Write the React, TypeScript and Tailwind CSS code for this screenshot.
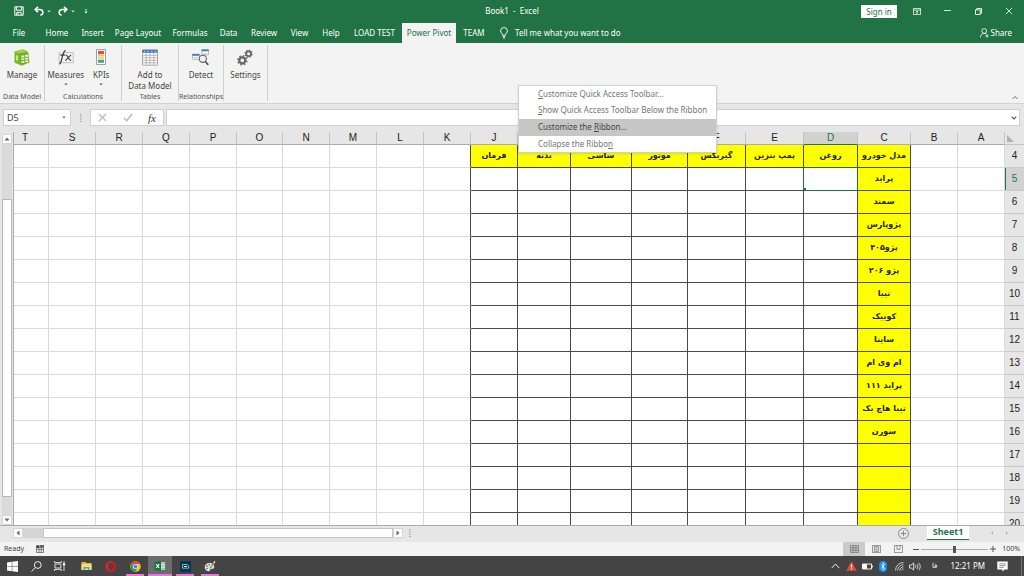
import type { ReactNode } from "react";

type Column = { name: string; width: string; framed?: boolean; frameEdge?: boolean };

const columns: Column[] = [
  { name: "T", width: "w-auto" },
  { name: "S", width: "w-[47px]" },
  { name: "R", width: "w-[47px]" },
  { name: "Q", width: "w-[47px]" },
  { name: "P", width: "w-[47px]" },
  { name: "O", width: "w-[46px]" },
  { name: "N", width: "w-[47px]" },
  { name: "M", width: "w-[47px]" },
  { name: "L", width: "w-[47px]" },
  { name: "K", width: "w-[47px]", frameEdge: true },
  { name: "J", width: "w-[47px]", framed: true },
  { name: "I", width: "w-[53px]", framed: true },
  { name: "H", width: "w-[61px]", framed: true },
  { name: "G", width: "w-[56px]", framed: true },
  { name: "F", width: "w-[58px]", framed: true },
  { name: "E", width: "w-[58px]", framed: true },
  { name: "D", width: "w-[54px]", framed: true },
  { name: "C", width: "w-[53px]", framed: true },
  { name: "B", width: "w-[47px]" },
  { name: "A", width: "w-[47px]" },
];

const headings: Record<string, string> = {
  J: "فرمان",
  I: "بدنه",
  H: "ساسی",
  G: "موتور",
  F: "گیربکس",
  E: "پمپ بنزین",
  D: "روغن",
  C: "مدل خودرو",
};

const models: Record<number, string> = {
  5: "پراید",
  6: "سمند",
  7: "پژوپارس",
  8: "پژو۴۰۵",
  9: "پژو ۲۰۶",
  10: "تیبا",
  11: "کوییک",
  12: "ساینا",
  13: "ام وی ام",
  14: "پراید ۱۱۱",
  15: "تیبا هاچ بک",
  16: "سورن",
};

const rows = Array.from({ length: 17 }, (_, i) => i + 4);

const tabs = [
  { label: "File", width: "w-[38px]" },
  { label: "Home", width: "w-[38px]" },
  { label: "Insert", width: "w-[33px]" },
  { label: "Page Layout", width: "w-[58px]" },
  { label: "Formulas", width: "w-[46px]" },
  { label: "Data", width: "w-[31px]" },
  { label: "Review", width: "w-[40px]" },
  { label: "View", width: "w-[31px]" },
  { label: "Help", width: "w-[32px]" },
  { label: "LOAD TEST", width: "w-[55px]" },
  { label: "Power Pivot", width: "w-[54px]", active: true },
  { label: "TEAM", width: "w-[36px]" },
];

function Caret({ className = "" }: { className?: string }) {
  return (
    <svg viewBox="0 0 6 4" className={`h-[3px] w-[4px] shrink-0 ${className}`} aria-hidden="true">
      <path d="M0.5 0.5h5L3 3.5z" fill="currentColor" />
    </svg>
  );
}

function TitleBar() {
  return (
    <header className="grid h-[22px] shrink-0 grid-cols-3 items-center text-white">
      <div className="flex items-center pl-[14px]">
        <button aria-label="Save">
          <svg viewBox="0 0 10 10" className="size-[10px]" fill="none" stroke="currentColor">
            <path d="M0.8 0.8h8.4v8.4H0.8zM2.3 1v3.2h5.4V1" />
            <path d="M2.8 9V6.3h4.4V9" />
            <path d="M4 7.2v1.6" />
          </svg>
        </button>
        <button aria-label="Undo" className="ml-[10px] flex items-center gap-[3px]">
          <svg viewBox="0 0 10 10" className="size-[10px]" fill="none" stroke="currentColor" strokeWidth="1.6">
            <path d="M4 0.9L1.2 3.5L4 6.1M1.4 3.5h4.3c4.1 0 4.1 5.5 0.6 5.5" />
          </svg>
          <Caret className="opacity-80" />
        </button>
        <button aria-label="Redo" className="ml-[7px] flex items-center gap-[3px]">
          <svg viewBox="0 0 10 10" className="size-[10px]" fill="none" stroke="currentColor" strokeWidth="1.6">
            <path d="M6 0.9l2.8 2.6L6 6.1M8.6 3.5H4.3c-4.1 0-4.1 5.5-0.6 5.5" />
          </svg>
          <Caret className="opacity-80" />
        </button>
        <button aria-label="Customize Quick Access Toolbar" className="ml-[9px]">
          <svg viewBox="0 0 5 6" className="h-[5px] w-[4px]" fill="currentColor">
            <path d="M1 0.5h3v1H1zM0.5 3h4L2.5 5.5z" />
          </svg>
        </button>
      </div>
      <h1 className="whitespace-pre text-center">Book1  -  Excel</h1>
      <div className="flex items-center justify-end pr-[11px]">
        <button className="mr-[16px] h-[13px] w-[36px] bg-white leading-[13px] text-[#217346]">Sign in</button>
        <button aria-label="Ribbon Display Options" className="mr-[23px]">
          <svg viewBox="0 0 8 7" className="h-[7px] w-[8px]" fill="none" stroke="currentColor" strokeWidth="0.8">
            <path d="M0.4 0.4h7.2v6.2H0.4zM0.4 2h7.2M4 6V3M2.7 4.2L4 3l1.3 1.2" />
          </svg>
        </button>
        <button aria-label="Minimize" className="mr-[24px]">
          <svg viewBox="0 0 7 7" className="size-[7px]" stroke="currentColor" strokeWidth="0.8">
            <path d="M0 2.5h7" />
          </svg>
        </button>
        <button aria-label="Restore Down" className="mr-[23px]">
          <svg viewBox="0 0 7 7" className="size-[7px]" fill="none" stroke="currentColor" strokeWidth="0.9">
            <path d="M0.5 1.8h4.7v4.7H0.5zM1.8 1.8V0.5h4.7v4.7H5.2" />
          </svg>
        </button>
        <button aria-label="Close">
          <svg viewBox="0 0 8 8" className="size-[8px]" stroke="currentColor" strokeWidth="0.8">
            <path d="M0.8 0.8l6.4 6.4M7.2 0.8L0.8 7.2" />
          </svg>
        </button>
      </div>
    </header>
  );
}

function TabStrip() {
  return (
    <nav className="flex h-[21px] shrink-0 items-stretch pt-px text-white">
      {tabs.map((tab) => (
        <button
          key={tab.label}
          className={`shrink-0 whitespace-nowrap ${tab.width} ${tab.active ? "bg-[#f3f3f3] text-[#217346]" : ""}`}
        >
          {tab.label}
        </button>
      ))}
      <button className="ml-[8px] flex items-center gap-[7px] whitespace-nowrap">
        <svg viewBox="0 0 8 12" className="h-[12px] w-[8px]" fill="none" stroke="currentColor" strokeWidth="0.9">
          <path d="M2.6 8.2C2.6 6.6 0.6 6 0.6 3.9a3.4 3.4 0 0 1 6.8 0C7.4 6 5.4 6.6 5.4 8.2zM2.7 9.6h2.6M3 11h2" />
        </svg>
        Tell me what you want to do
      </button>
      <button className="ml-auto mr-[12px] flex items-center gap-[2px]">
        <svg viewBox="0 0 9 10" className="h-[10px] w-[9px]" fill="none" stroke="currentColor" strokeWidth="0.8">
          <circle cx="4.2" cy="3" r="2.4" />
          <path d="M0.5 9.4c0-2.4 1.4-4 3.7-4 1 0 1.8 0.3 2.4 0.8M5.4 8h3.2M7 6.4v3.2" />
        </svg>
        Share
      </button>
    </nav>
  );
}

function RibbonButton({ label, icon, menu }: { label: ReactNode; icon: ReactNode; menu?: boolean }) {
  return (
    <button className="flex flex-col items-center">
      <span className="flex h-[20px] items-center">{icon}</span>
      <span className="mt-[2px] whitespace-nowrap leading-[11px]">{label}</span>
      {menu && <Caret className="mt-[3px] text-[#666]" />}
    </button>
  );
}

function RibbonGroup({ name, width, children }: { name: string; width: string; children: ReactNode }) {
  return (
    <section className={`my-[2px] flex shrink-0 flex-col border-r border-[#d0d0d0] pt-[2px] ${width}`}>
      <div className="flex flex-1 items-start justify-center gap-[9px]">{children}</div>
      <div className="flex h-[9px] justify-center whitespace-nowrap text-[7px] leading-[9px] text-[#555]">{name}</div>
    </section>
  );
}

const gearTeeth = [0, 45, 90, 135, 180, 225, 270, 315];

function Gear({ cx, cy, r }: { cx: number; cy: number; r: number }) {
  return (
    <g transform={`translate(${cx} ${cy})`}>
      <circle r={r} fill="none" stroke="#696969" strokeWidth={r * 0.75} />
      {gearTeeth.map((a) => (
        <rect key={a} x={-r * 0.27} y={-r * 1.75} width={r * 0.54} height={r * 0.65} fill="#696969" transform={`rotate(${a + 15})`} />
      ))}
    </g>
  );
}

function Ribbon() {
  return (
    <div className="flex h-[61px] shrink-0 border-b border-[#d2d2d2] bg-[#f3f3f3] text-[#444]">
      <RibbonGroup name="Data Model" width="w-[45px]">
        <RibbonButton
          label="Manage"
          icon={
            <svg viewBox="0 0 16 17" className="h-[17px] w-[16px]">
              <path d="M0.5 2.5L9 0.3l4.5 2v12L8 16.7l-7.5-3z" fill="#7ab829" />
              <path d="M0.5 2.5L9 0.3l4.5 2L6 4.5z" fill="#a0d34d" />
              <path d="M5.8 4.6l8.6-1 1.1 10.2-9.7 2z" fill="#6dad1f" />
              <path d="M7.3 6.4h3v2h-3zM11.2 5.8h3v2h-3zM7.3 9.4h3v1.6h-3zM11.2 8.8h3v1.7h-3zM7.3 12.2h3v1.7h-3zM11.2 11.6h3v1.7h-3z" fill="#effadc" />
              <path d="M2 6l2 .8v5L2 11z" fill="#c6e78e" />
            </svg>
          }
        />
      </RibbonGroup>
      <RibbonGroup name="Calculations" width="w-[77px]">
        <RibbonButton
          label="Measures"
          menu
          icon={
            <svg viewBox="0 0 16 17" className="h-[17px] w-[16px]" fill="none" stroke="#444">
              <path d="M5 3.5h10.3v10.2H1V3.5h1.5" stroke="#aaa" strokeWidth="0.7" />
              <path d="M1 14.8c3.2 1.2 3-13.6 6.6-13.3M2.4 6h4.4" strokeWidth="1.3" />
              <path d="M7.6 6.2c2.5-1 2.7 6.3 5.6 5M13 5.8L7.4 11.6" strokeWidth="1.2" />
            </svg>
          }
        />
        <RibbonButton
          label="KPIs"
          menu
          icon={
            <svg viewBox="0 0 10 16" className="h-[16px] w-[10px]">
              <path d="M0.5 0.5h9v15h-9z" fill="#fff" stroke="#8a8a8a" strokeWidth="0.8" />
              <path d="M2 2h6v3H2z" fill="#d9543a" />
              <path d="M2 5.4h6v2.2H2z" fill="#f0bd6c" />
              <path d="M2 8h6v2.2H2z" fill="#e8d59b" />
              <path d="M2 10.8h6v3H2z" fill="#4f9f83" />
            </svg>
          }
        />
        <span className="w-0" />
      </RibbonGroup>
      <RibbonGroup name="Tables" width="w-[57px]">
        <RibbonButton
          label={
            <>
              Add to
              <br />
              Data Model
            </>
          }
          icon={
            <svg viewBox="0 0 16 17" className="h-[17px] w-[16px]">
              <path d="M0.5 0.8h15v15.4h-15z" fill="#fff" stroke="#8f8f8f" strokeWidth="0.7" />
              <path d="M0.5 0.8h15v3h-15z" fill="#3e78b8" />
              <path d="M0.5 6.3h15M0.5 8.8h15M0.5 11.3h15M0.5 13.8h15M4.2 4v12M8 4v12M11.8 4v12" stroke="#9c9c9c" strokeWidth="0.7" />
              <path d="M2 2.2h1.5M5.3 2.2h1.5M9 2.2h1.5M12.6 2.2h1.5" stroke="#fff" strokeWidth="0.7" />
            </svg>
          }
        />
      </RibbonGroup>
      <RibbonGroup name="Relationships" width="w-[45px]">
        <RibbonButton
          label="Detect"
          icon={
            <svg viewBox="0 0 17 17" className="size-[17px]">
              <path d="M10 0.8h6.4v5H10zM0.6 5.2h7v5h-7z" fill="#fff" stroke="#999" strokeWidth="0.7" />
              <path d="M9.7 0.5h7v1.8h-7zM0.3 4.9h7v1.8h-7z" fill="#3a78bf" />
              <path d="M2 8.5h4M11.5 4.2h3" stroke="#bbb" strokeWidth="0.8" />
              <circle cx="10.8" cy="9.8" r="3.6" fill="#eaf2fa" stroke="#666" strokeWidth="1.1" />
              <path d="M13.3 12.5l3 3.4" stroke="#555" strokeWidth="1.7" />
            </svg>
          }
        />
      </RibbonGroup>
      <RibbonGroup name="" width="w-[44px]">
        <RibbonButton
          label="Settings"
          icon={
            <svg viewBox="0 0 16 17" className="h-[17px] w-[16px]">
              <Gear cx={5.3} cy={11.3} r={3} />
              <Gear cx={11.6} cy={4.7} r={2.4} />
            </svg>
          }
        />
      </RibbonGroup>
      <button aria-label="Collapse the Ribbon" className="mb-[3px] ml-auto mr-[6px] self-end">
        <svg viewBox="0 0 7 5" className="h-[5px] w-[6px]" fill="none" stroke="#555">
          <path d="M0.7 4.2L3.5 1.3l2.8 2.9" />
        </svg>
      </button>
    </div>
  );
}

function FormulaBar() {
  return (
    <div className="flex h-[28px] shrink-0 items-start bg-[#e6e6e6] pl-[3px] pr-[4px] pt-[5px]">
      <div className="flex h-[17px] w-[68px] items-center border border-[#d0d0d0] bg-white pr-[4px]">
        <input aria-label="Name Box" defaultValue="D5" className="w-0 flex-1 bg-transparent pl-[3px] text-[9px] text-[#444] outline-none" />
        <Caret className="text-[#666]" />
      </div>
      <svg viewBox="0 0 2 8" className="ml-[9px] mt-[5px] h-[8px] w-[2px]" fill="#999" aria-hidden="true">
        <path d="M0 0h1.5v1H0zM0 2.3h1.5v1H0zM0 4.6h1.5v1H0zM0 7h1.5v1H0z" />
      </svg>
      <div className="ml-[8px] flex h-[17px] w-[74px] items-center justify-between border border-[#d0d0d0] bg-white px-[7px]">
        <button aria-label="Cancel">
          <svg viewBox="0 0 9 9" className="size-[9px]" stroke="#bbb" strokeWidth="1.3">
            <path d="M1 1l7 7M8 1L1 8" />
          </svg>
        </button>
        <button aria-label="Enter">
          <svg viewBox="0 0 10 9" className="h-[9px] w-[10px]" fill="none" stroke="#bbb" strokeWidth="1.5">
            <path d="M1 5l2.7 2.7L9 1" />
          </svg>
        </button>
        <button aria-label="Insert Function" className="font-['Liberation_Serif',serif] text-[11px] italic leading-[14px] text-[#333]">
          fx
        </button>
      </div>
      <div className="ml-[2px] flex h-[17px] flex-1 items-center border border-[#d0d0d0] bg-white pr-[2px]">
        <input aria-label="Formula Bar" className="min-w-0 flex-1 bg-transparent px-1 outline-none" />
        <svg viewBox="0 0 7 5" className="h-[4px] w-[6px]" fill="none" stroke="#555" strokeWidth="1.3" aria-hidden="true">
          <path d="M0.7 0.8L3.5 3.7l2.8-2.9" />
        </svg>
      </div>
    </div>
  );
}

function ArrowButton({ label, path, bordered = true }: { label: string; path: string; bordered?: boolean }) {
  return (
    <button
      aria-label={label}
      className={`flex size-[10px] shrink-0 items-center justify-center ${bordered ? "border border-[#d6d6d6] bg-white text-[#666]" : "text-[#b5b5b5]"}`}
    >
      <svg viewBox="0 0 6 6" className="size-[6px]" fill="currentColor">
        <path d={path} />
      </svg>
    </button>
  );
}

function VerticalScroll() {
  return (
    <div className="flex w-[13px] shrink-0 flex-col items-center bg-[#e6e6e6] pt-[2px]">
      <ArrowButton label="Scroll up" path="M0.5 4.5h5L3 1.5z" />
      <div className="flex w-[10px] flex-1 flex-col bg-[#dadada] pt-[55px]">
        <div className="h-[298px] border border-[#b8b8b8] bg-white" />
      </div>
      <ArrowButton label="Scroll down" path="M0.5 1.5h5L3 4.5z" />
    </div>
  );
}

function cellClass(col: Column, row: number) {
  const yellow = col.name === "C" || (row === 4 && col.framed);
  const edge = col.framed
    ? "border-r-[#4a4a4a] border-b-[#4a4a4a]"
    : col.frameEdge
      ? "border-r-[#4a4a4a] border-b-[#dadada]"
      : "border-r-[#dadada] border-b-[#dadada]";
  const anchor = row === 5 && col.name === "D" ? "relative" : "";
  return `h-[23px] border-r border-b p-0 text-center align-middle whitespace-nowrap ${anchor} ${edge} ${yellow ? "bg-[#ffff00]" : "bg-white"}`;
}

function Sheet() {
  return (
    <div className="min-w-0 flex-1 overflow-hidden border-l border-[#ababab]">
      <table className="w-full table-fixed border-separate border-spacing-0">
        <colgroup>
          {columns.map((c) => (
            <col key={c.name} className={c.width} />
          ))}
          <col className="w-[19px]" />
        </colgroup>
        <thead className="font-['Liberation_Sans',sans-serif] text-[10px] leading-[10px] text-[#222]">
          <tr>
            {columns.map((c) => (
              <th
                key={c.name}
                scope="col"
                className={`h-[13px] border-r border-b border-r-[#c4c4c4] py-0 pl-0 font-medium ${c.name === "T" ? "pr-[12px]" : "pr-0"} ${c.name === "D" ? "border-b-[#217346] bg-[#d2d2d2] text-[#217346]" : "border-b-[#ababab] bg-[#e6e6e6]"}`}
              >
                {c.name}
              </th>
            ))}
            <th className="h-[13px] border-b border-[#c4c4c4] bg-[#e6e6e6] p-0">
              <button aria-label="Select all" className="flex w-full pl-[2px]">
                <svg viewBox="0 0 7 7" className="size-[7px]" fill="#b0b0b0">
                  <path d="M0 0v7h7z" />
                </svg>
              </button>
            </th>
          </tr>
        </thead>
        <tbody>
          {rows.map((r) => (
            <tr key={r}>
              {columns.map((c) => {
                const text = r === 4 ? headings[c.name] : c.name === "C" ? models[r] : undefined;
                return (
                  <td key={c.name} className={cellClass(c, r)}>
                    {text && (
                      <span dir="rtl" lang="fa" className="block font-['DejaVu_Sans',sans-serif] text-[8px] font-bold leading-[14px] text-[#222]">
                        {text}
                      </span>
                    )}
                    {r === 5 && c.name === "D" && (
                      <span className="absolute -inset-px border border-[#217346]">
                        <span className="absolute -bottom-px -left-px size-[3px] bg-[#217346]" />
                      </span>
                    )}
                  </td>
                );
              })}
              <th
                scope="row"
                className={`h-[23px] border-b border-[#c9c9c9] p-0 font-['Liberation_Sans',sans-serif] text-[10px] font-medium leading-[12px] ${r === 5 ? "bg-[#d2d2d2] text-[#217346] shadow-[inset_1px_0_0_#217346]" : "bg-[#e6e6e6] text-[#222]"}`}
              >
                {r}
              </th>
            </tr>
          ))}
        </tbody>
      </table>
    </div>
  );
}

function SheetTabs() {
  return (
    <div className="flex h-[17px] shrink-0 items-start border-t border-[#ababab] bg-[#e6e6e6] pl-[13px]">
      <div className="mt-[2px] flex h-[10px] w-[390px] items-center bg-[#d4d4d4]">
        <ArrowButton label="Scroll left" path="M4.5 0.5v5L1.5 3z" />
        <div className="ml-[20px] h-[10px] flex-1 border border-[#c6c6c6] bg-white" />
        <ArrowButton label="Scroll right" path="M1.5 0.5v5L4.5 3z" />
      </div>
      <svg viewBox="0 0 2 8" className="ml-[6px] mt-[3px] h-[8px] w-[2px]" fill="#999" aria-hidden="true">
        <path d="M0 0h1.5v1H0zM0 2.3h1.5v1H0zM0 4.6h1.5v1H0zM0 7h1.5v1H0z" />
      </svg>
      <button aria-label="New sheet" className="ml-auto mt-[2px]">
        <svg viewBox="0 0 11 11" className="size-[11px]" fill="none" stroke="#777" strokeWidth="0.8">
          <circle cx="5.5" cy="5.5" r="5" />
          <path d="M5.5 2.8v5.4M2.8 5.5h5.4" />
        </svg>
      </button>
      <button className="ml-[18px] h-[14px] w-[42px] border-b border-[#217346] bg-white pb-[2px] font-['Open_Sans',sans-serif] text-[9px] font-bold leading-[11px] text-[#217346]">
        Sheet1
      </button>
      <div className="ml-[18px] mr-[12px] mt-[2px] flex gap-[5px]">
        <ArrowButton label="Previous sheet" path="M4 1v4L2 3z" bordered={false} />
        <ArrowButton label="Next sheet" path="M2 1v4L4 3z" bordered={false} />
      </div>
    </div>
  );
}

function StatusBar() {
  return (
    <footer className="flex h-[14px] shrink-0 items-center bg-[#f3f3f3] px-[4px] text-[7px] text-[#444]">
      <span>Ready</span>
      <button aria-label="Macro recording" className="ml-[12px]">
        <svg viewBox="0 0 8 8" className="size-[8px]">
          <path d="M0.5 2.5h7v5h-7zM0.5 4.5h7M3 2.5v5M5.3 2.5v5" fill="none" stroke="#666" strokeWidth="0.8" />
          <path d="M3.5 0h4.5v2.5H3.5z" fill="#666" />
          <circle cx="1.6" cy="1.6" r="1.6" fill="#444" />
        </svg>
      </button>
      <div className="ml-auto flex h-full items-center">
        <button aria-label="Normal" className="flex h-full w-[22px] items-center justify-center bg-[#cacaca]">
          <svg viewBox="0 0 9 8" className="h-[8px] w-[9px]" fill="none" stroke="#777" strokeWidth="0.8">
            <path d="M0.4 0.4h8.2v7.2H0.4zM0.4 2.8h8.2M0.4 5.2h8.2M3.1 0.4v7.2M5.9 0.4v7.2" />
          </svg>
        </button>
        <button aria-label="Page Layout view" className="flex h-full w-[22px] items-center justify-center">
          <svg viewBox="0 0 9 8" className="h-[8px] w-[9px]" fill="none" stroke="#777" strokeWidth="0.8">
            <path d="M0.4 0.4h8.2v7.2H0.4zM2.3 1.6h4.4v4.8H2.3zM3.2 3h2.6M3.2 4.8h2.6" />
          </svg>
        </button>
        <button aria-label="Page Break Preview" className="flex h-full w-[22px] items-center justify-center">
          <svg viewBox="0 0 9 8" className="h-[8px] w-[9px]" fill="none" stroke="#777" strokeWidth="0.8">
            <path d="M0.4 0.4h8.2v7.2H0.4zM3 0.4v4h3M6 0.4v4" />
          </svg>
        </button>
        <button aria-label="Zoom out" className="ml-[4px] flex size-[6px] items-center">
          <span className="h-px w-full bg-[#555]" />
        </button>
        <input
          type="range"
          aria-label="Zoom"
          defaultValue={50}
          className="mx-[2px] h-[8px] w-[67px] appearance-none bg-[linear-gradient(#aaa,#aaa)] bg-[length:100%_1px] bg-center bg-no-repeat [&::-webkit-slider-thumb]:h-[7px] [&::-webkit-slider-thumb]:w-[3px] [&::-webkit-slider-thumb]:appearance-none [&::-webkit-slider-thumb]:bg-[#555]"
        />
        <button aria-label="Zoom in">
          <svg viewBox="0 0 6 6" className="size-[6px]" stroke="#555">
            <path d="M0 3h6M3 0v6" />
          </svg>
        </button>
        <button className="ml-[6px] text-right">100%</button>
      </div>
    </footer>
  );
}

function TaskItem({ label, children, running, active }: { label: string; children: ReactNode; running?: boolean; active?: boolean }) {
  const size = running && !active ? "mx-[3px] w-[18px]" : "w-[24px]";
  return (
    <button
      aria-label={label}
      className={`flex h-[20px] items-center justify-center ${size} ${running ? "shadow-[inset_0_-2px_0_#e478dc]" : ""} ${active ? "bg-[#6c6c6c]" : ""}`}
    >
      {children}
    </button>
  );
}

function Taskbar() {
  return (
    <div className="flex h-[20px] shrink-0 items-center bg-[#444] text-white">
      <TaskItem label="Start">
        <svg viewBox="0 0 11 11" className="size-[11px]" fill="currentColor">
          <path d="M0 1.5l4.8-.7v4.4H0zM5.3.7L11 0v5.2H5.3zM0 5.8h4.8v4.4L0 9.5zM5.3 5.8H11V11l-5.7-.7z" />
        </svg>
      </TaskItem>
      <TaskItem label="Search">
        <svg viewBox="0 0 11 11" className="size-[11px]" fill="none" stroke="currentColor" strokeWidth="0.9">
          <circle cx="6.8" cy="4" r="3.4" />
          <path d="M4.3 6.5L0.5 10.5" />
        </svg>
      </TaskItem>
      <TaskItem label="Task View">
        <svg viewBox="0 0 12 10" className="h-[10px] w-[12px]" fill="none" stroke="currentColor" strokeWidth="0.8">
          <path d="M0.5 0v1.6h6.8V0M1 3h5.8v4H1zM0.5 10V8.4h6.8V10M10 0v10" />
          <path d="M9.2 2.5h1.6v1.5H9.2z" fill="currentColor" />
        </svg>
      </TaskItem>
      <div className="ml-[2px] flex">
        <TaskItem label="File Explorer">
          <svg viewBox="0 0 11 10" className="h-[10px] w-[11px]">
            <path d="M0.5 1h4l1 1H10.5v7H0.5z" fill="#e9b83a" />
            <path d="M0.5 3.2h10v5.8h-10z" fill="#fbdc75" />
            <path d="M2.5 6h6v3.2H7V7.5H4v1.7H2.5z" fill="#4ba6dc" />
          </svg>
        </TaskItem>
        <TaskItem label="Opera">
          <svg viewBox="0 0 11 11" className="size-[11px]">
            <circle cx="5.5" cy="5.5" r="5.2" fill="#df2029" />
            <ellipse cx="5.5" cy="5.5" rx="2.1" ry="3.7" fill="#444" />
            <path d="M7 1.7c3 1 3.3 6.500 0 7.600C8.200 7.500 8.200 3.500 7 1.700z" fill="#a70e16" />
          </svg>
        </TaskItem>
      </div>
      <div className="ml-px flex gap-px">
        <TaskItem label="Chrome" running>
          <svg viewBox="0 0 11 11" className="size-[11px]">
            <circle cx="5.5" cy="5.5" r="5.2" fill="#f7c52b" />
            <path d="M1 2.9A5.2 5.2 0 0 1 10 2.900H5.500L3.300 6.800z" fill="#df4937" />
            <path d="M1 2.900A5.200 5.200 0 0 0 5.200 10.700L7.700 6.800H3.300z" fill="#2f9d55" />
            <circle cx="5.5" cy="5.5" r="2.5" fill="#fff" />
            <circle cx="5.5" cy="5.5" r="1.9" fill="#4285f4" />
          </svg>
        </TaskItem>
        <TaskItem label="Excel" running active>
          <svg viewBox="0 0 12 10" className="h-[10px] w-[12px]">
            <path d="M6 1h5.5v8H6z" fill="#fff" stroke="#217346" strokeWidth="0.6" />
            <path d="M7.5 2.8h1.3M9.5 2.8h1.3M7.5 5h1.3M9.5 5h1.3M7.5 7.2h1.3M9.5 7.2h1.3" stroke="#217346" />
            <path d="M0.5 1L7 0v10L0.5 9z" fill="#167241" />
            <path d="M2.2 3.2l3 3.8M5.2 3.2l-3 3.8" stroke="#fff" strokeWidth="1.1" />
          </svg>
        </TaskItem>
        <TaskItem label="Screen Recorder" running>
          <svg viewBox="0 0 11 11" className="size-[11px]">
            <path d="M0 0h11v11H0z" fill="#07384f" />
            <path d="M2.5 3.5h4.8l1.4 1.200v2.500H2.500z" fill="none" stroke="#8fd6ed" strokeWidth="0.8" />
            <path d="M4 5.5h3" stroke="#fff" />
          </svg>
        </TaskItem>
        <TaskItem label="Paint" running>
          <svg viewBox="0 0 12 11" className="h-[11px] w-[12px]">
            <path d="M5.5 2C2.5 2 .7 4 .7 6.2c0 2.4 1.900 4 4 4 1.700 0 1-1.800 2.200-2.200 1.300-.400 3 .3 3.300-1.800C10.500 3.800 8.500 2 5.500 2z" fill="#d2e4ed" />
            <circle cx="3" cy="5" r="0.9" fill="#e65345" />
            <circle cx="5.3" cy="3.7" r="0.9" fill="#52ab56" />
            <circle cx="2.9" cy="7.6" r="0.9" fill="#3688cc" />
            <path d="M6 7.5L10.6 1" stroke="#c98135" strokeWidth="1.3" />
            <path d="M9.7 2L11 .3" stroke="#e9d7b5" strokeWidth="1.4" />
          </svg>
        </TaskItem>
      </div>
      <div className="ml-auto flex items-center">
        <button aria-label="Show hidden icons" className="mr-[6px]">
          <svg viewBox="0 0 9 6" className="h-[6px] w-[9px]" fill="none" stroke="currentColor" strokeWidth="0.9">
            <path d="M0.6 5.2L4.5 1l3.9 4.2" />
          </svg>
        </button>
        <button aria-label="Warning" className="mr-[5px]">
          <svg viewBox="0 0 11 10" className="h-[10px] w-[11px]">
            <path d="M5.5 0.3L10.8 9.7H0.2z" fill="#e44b31" />
            <path d="M5.5 3.3v3.200M5.500 7.400v1.200" stroke="#fff" strokeWidth="1.2" />
          </svg>
        </button>
        <button aria-label="Battery" className="mr-[6px]">
          <svg viewBox="0 0 11 7" className="h-[7px] w-[11px]" fill="none" stroke="currentColor" strokeWidth="0.9">
            <path d="M0.5 1h9v5h-9zM10.4 2.5v2" />
            <path d="M1 1.5h3.500v4H1z" fill="currentColor" />
          </svg>
        </button>
        <button aria-label="Bluetooth" className="mr-[8px]">
          <svg viewBox="0 0 8 11" className="h-[11px] w-[8px]">
            <rect width="8" height="11" rx="3.8" fill="#168ce8" />
            <path d="M2 3.5l4 4L4 9.3V1.7l2 1.8-4 4" fill="none" stroke="#fff" strokeWidth="0.8" />
          </svg>
        </button>
        <button aria-label="Network" className="mr-[5px]">
          <svg viewBox="0 0 9 9" className="size-[9px]" fill="none" stroke="#d8d8d8" strokeWidth="0.9">
            <path d="M0.6 8.5C0.6 4 4 0.6 8.5 0.6M2.7 8.5c0-3.2 2.6-5.8 5.8-5.8M4.800 8.500c0-2 1.700-3.700 3.700-3.700M6.800 8.500c0-1 .7-1.700 1.700-1.700" />
          </svg>
        </button>
        <button aria-label="Volume" className="mr-[11px]">
          <svg viewBox="0 0 12 9" className="h-[9px] w-[12px]" fill="none" stroke="currentColor" strokeWidth="0.8">
            <path d="M0.5 3h1.7L4.7 1v7L2.2 6H0.5zM6.2 3.2c.6.8.6 1.800 0 2.600M7.900 2c1.300 1.500 1.300 3.500 0 5M9.700.8c2 2.200 2 5.200 0 7.400" />
          </svg>
        </button>
        <span lang="fa" className="mr-[13px] font-['DejaVu_Sans',sans-serif] text-[7px]">فا</span>
        <time className="mr-[12px] whitespace-nowrap">12:21 PM</time>
        <button aria-label="Notifications" className="mr-[13px]">
          <svg viewBox="0 0 11 11" className="size-[11px]">
            <path d="M0.3 0.5h10.4v8H7.5L5.5 10.700V8.500H0.300z" fill="#fff" />
            <path d="M2.3 2.8h6.4M2.3 4.6h6.4M2.3 6.4h4.5" stroke="#666" strokeWidth="0.7" />
          </svg>
        </button>
        <div className="h-[20px] w-[3px] border-l border-[#707070]" />
      </div>
    </div>
  );
}

function ContextMenu() {
  const item = "block w-full pl-[19px] pb-px text-left whitespace-nowrap";
  return (
    <div role="menu" className="absolute left-[518px] top-[85px] w-[199px] border border-[#d0d0d0] bg-white text-[#767676] shadow-sm">
      <button role="menuitem" className={`${item} h-[16px]`}>
        <u>C</u>ustomize Quick Access Toolbar...
      </button>
      <button role="menuitem" className={`${item} h-[16px]`}>
        <u>S</u>how Quick Access Toolbar Below the Ribbon
      </button>
      <button role="menuitem" className={`${item} mt-px h-[17px] bg-[#c6c6c6] text-[#444]`}>
        Customize the <u>R</u>ibbon...
      </button>
      <button role="menuitem" className={`${item} h-[16px]`}>
        Collapse the Ribbo<u>n</u>
      </button>
    </div>
  );
}

export default function App() {
  return (
    <div className="relative flex h-screen flex-col overflow-hidden bg-[#217346] font-['Noto_Sans','Open_Sans',sans-serif] text-[8px] leading-[12px]">
      <TitleBar />
      <TabStrip />
      <Ribbon />
      <FormulaBar />
      <main className="flex min-h-0 flex-1 bg-[#e6e6e6]">
        <VerticalScroll />
        <Sheet />
      </main>
      <SheetTabs />
      <StatusBar />
      <Taskbar />
      <ContextMenu />
    </div>
  );
}
